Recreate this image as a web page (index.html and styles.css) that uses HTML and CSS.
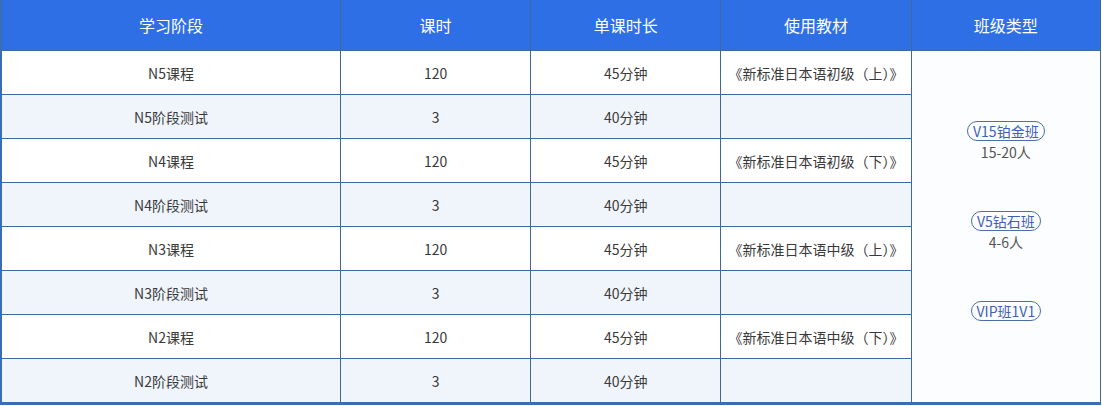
FILE: index.html
```html
<!DOCTYPE html>
<html lang="zh-CN">
<head>
<meta charset="utf-8">
<link rel="stylesheet" href="styles.css">
</head>
<body>
<table class="course-table">
  <colgroup>
    <col class="c1"><col class="c2"><col class="c3"><col class="c4"><col class="c5">
  </colgroup>
  <thead>
    <tr><th>学习阶段</th><th>课时</th><th>单课时长</th><th>使用教材</th><th>班级类型</th></tr>
  </thead>
  <tbody>
    <tr class="odd"><td>N5课程</td><td>120</td><td>45分钟</td><td>《新标准日本语初级（上）》</td>
      <td class="types" rowspan="8">
        <div class="type-list">
          <div class="group"><span class="badge">V15铂金班</span><span class="count">15-20人</span></div>
          <div class="group"><span class="badge">V5钻石班</span><span class="count">4-6人</span></div>
          <div class="group"><span class="badge">VIP班1V1</span></div>
        </div>
      </td>
    </tr>
    <tr class="even"><td>N5阶段测试</td><td>3</td><td>40分钟</td><td></td></tr>
    <tr class="odd"><td>N4课程</td><td>120</td><td>45分钟</td><td>《新标准日本语初级（下）》</td></tr>
    <tr class="even"><td>N4阶段测试</td><td>3</td><td>40分钟</td><td></td></tr>
    <tr class="odd"><td>N3课程</td><td>120</td><td>45分钟</td><td>《新标准日本语中级（上）》</td></tr>
    <tr class="even"><td>N3阶段测试</td><td>3</td><td>40分钟</td><td></td></tr>
    <tr class="odd"><td>N2课程</td><td>120</td><td>45分钟</td><td>《新标准日本语中级（下）》</td></tr>
    <tr class="even"><td>N2阶段测试</td><td>3</td><td>40分钟</td><td></td></tr>
  </tbody>
</table>
</body>
</html>
```

FILE: styles.css
```css
html, body {
  margin: 0;
  padding: 0;
  background: #ffffff;
}
body {
  font-family: "Noto Sans CJK SC", "Noto Sans", sans-serif;
  color: #3a3a3a;
}
.course-table {
  width: 1101px;
  border-collapse: collapse;
  table-layout: fixed;
  border-left: 2px solid #3a6db5;
  border-bottom: 3px solid #3a6db5;
  border-right: 1px solid #3f6a95;
}
.c1 { width: 339px; }
.c2, .c3, .c4 { width: 190px; }
.c5 { width: 189px; }
.course-table th {
  height: 50px;
  padding: 0;
  background: #2f6fe6;
  color: #ffffff;
  font-weight: normal;
  font-size: 16px;
  text-align: center;
  border-left: 1px solid #3f6a95;
}
.course-table th:first-child { border-left: none; }
.course-table td {
  height: 43px;
  padding: 0;
  font-size: 14px;
  text-align: center;
  border: 1px solid #3f6a95;
}
.course-table td:first-child { border-left: none; }
.odd td { background: #ffffff; }
.even td { background: #f0f5fc; }
.course-table td.types {
  background: #fbfdff;
  vertical-align: middle;
}
.type-list {
  display: flex;
  flex-direction: column;
  align-items: center;
  gap: 49px;
  padding-bottom: 12px;
}
.group {
  display: flex;
  flex-direction: column;
  align-items: center;
  gap: 1px;
}
.badge {
  display: inline-block;
  height: 18px;
  line-height: 18px;
  padding: 0 5px;
  border: 1px solid #4a6ea8;
  border-radius: 10px;
  color: #3e5fb5;
  font-size: 14px;
}
.count {
  line-height: 20px;
  font-size: 14px;
  color: #555555;
}
```
